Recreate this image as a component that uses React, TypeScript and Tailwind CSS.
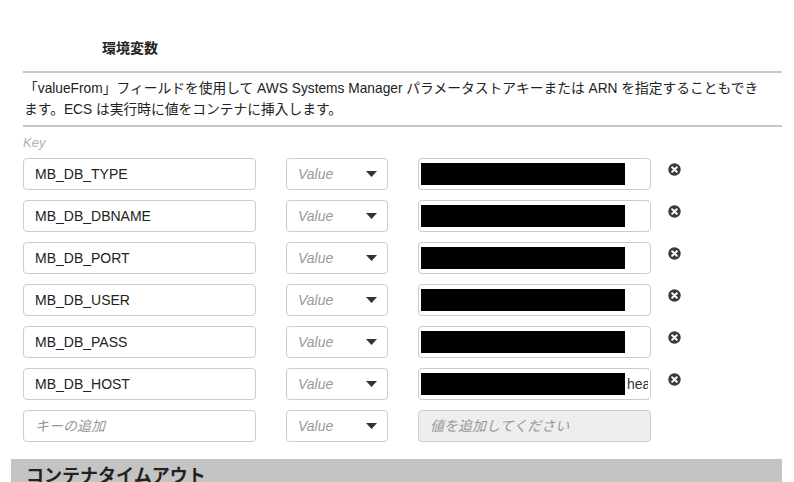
import React from "react";

const FONT = { fontFamily: '"Liberation Sans", Arial, "Noto Sans CJK JP", sans-serif' };

function RemoveIcon() {
  return (
    <svg width="13" height="13" viewBox="0 0 13 13" className="block">
      <circle cx="6.5" cy="6.5" r="6.2" fill="#3a3a3a" />
      <path d="M4.2 4.2 L8.8 8.8 M8.8 4.2 L4.2 8.8" stroke="#fff" strokeWidth="2" strokeLinecap="round" />
    </svg>
  );
}

function Caret() {
  return (
    <svg width="11" height="6" viewBox="0 0 11 6" className="block">
      <path d="M0 0 H11 L5.5 6 Z" fill="#333" />
    </svg>
  );
}

function SelectBox() {
  return (
    <div className="w-[102px] h-[32px] border border-[#cccccc] rounded-[4px] bg-white flex items-center justify-between pl-[11px] pr-[10px]">
      <span className="italic text-[14px] text-[#999]">Value</span>
      <Caret />
    </div>
  );
}

function Row({ name, tail }: { name: string; tail?: string }) {
  return (
    <div className="flex items-start h-[32px]">
      <div className="w-[233px] h-[32px] border border-[#cccccc] rounded-[4px] bg-white flex items-center px-[11px] text-[14px] text-[#222]">
        {name}
      </div>
      <div className="ml-[30px]">
        <SelectBox />
      </div>
      <div className="ml-[30px] w-[233px] h-[32px] border border-[#cccccc] rounded-[4px] bg-white flex items-center pl-[2px] overflow-hidden relative">
        <div className="w-[204px] h-[22px] bg-black shrink-0" />
        {tail && (
          <span className="text-[14px] text-[#333] ml-[2px] w-[21px] overflow-hidden whitespace-nowrap">{tail}</span>
        )}
      </div>
      <div className="ml-[17px] mt-[5px]">
        <RemoveIcon />
      </div>
    </div>
  );
}

export default function App() {
  const rows = ["MB_DB_TYPE", "MB_DB_DBNAME", "MB_DB_PORT", "MB_DB_USER", "MB_DB_PASS"];
  return (
    <div className="w-[794px] h-[482px] overflow-hidden bg-white" style={FONT}>
      <div className="ml-[11px] w-[771px]">
        <div className="ml-[12px]">
          <div className="pt-[39px] pl-[79px] text-[14px] leading-[18px] font-bold text-[#222]">環境変数</div>
          <div className="mt-[14px] h-[2px] bg-[#c8c8c8]" />
          <div className="pt-[5px] pb-[5px] pl-[1px] text-[13.75px] leading-[21px] text-[#222]">
            「valueFrom」フィールドを使用して AWS Systems Manager パラメータストアキーまたは ARN を指定することもでき
            <br />
            ます。ECS は実行時に値をコンテナに挿入します。
          </div>
          <div className="h-[2px] bg-[#c8c8c8]" />
          <div className="mt-[7px] text-[13px] leading-[18px] italic text-[#b0b0b0]">Key</div>
          <div className="mt-[6px] flex flex-col gap-[10px]">
            {rows.map((r) => (
              <Row key={r} name={r} />
            ))}
            <Row name="MB_DB_HOST" tail="hea" />
            <div className="flex items-start h-[32px]">
              <div className="w-[233px] h-[32px] border border-[#cccccc] rounded-[4px] bg-white flex items-center px-[11px] text-[14px] italic text-[#999]">
                キーの追加
              </div>
              <div className="ml-[30px]">
                <SelectBox />
              </div>
              <div className="ml-[30px] w-[233px] h-[32px] border border-[#cccccc] rounded-[4px] bg-[#eeeeee] flex items-center px-[11px] text-[14px] italic text-[#999]">
                値を追加してください
              </div>
            </div>
          </div>
        </div>
        <div className="mt-[17px] bg-[#c4c4c4] h-[40px] pt-[5px] pl-[15px] text-[18px] leading-[24px] font-bold text-[#222]">
          コンテナタイムアウト
        </div>
      </div>
    </div>
  );
}
